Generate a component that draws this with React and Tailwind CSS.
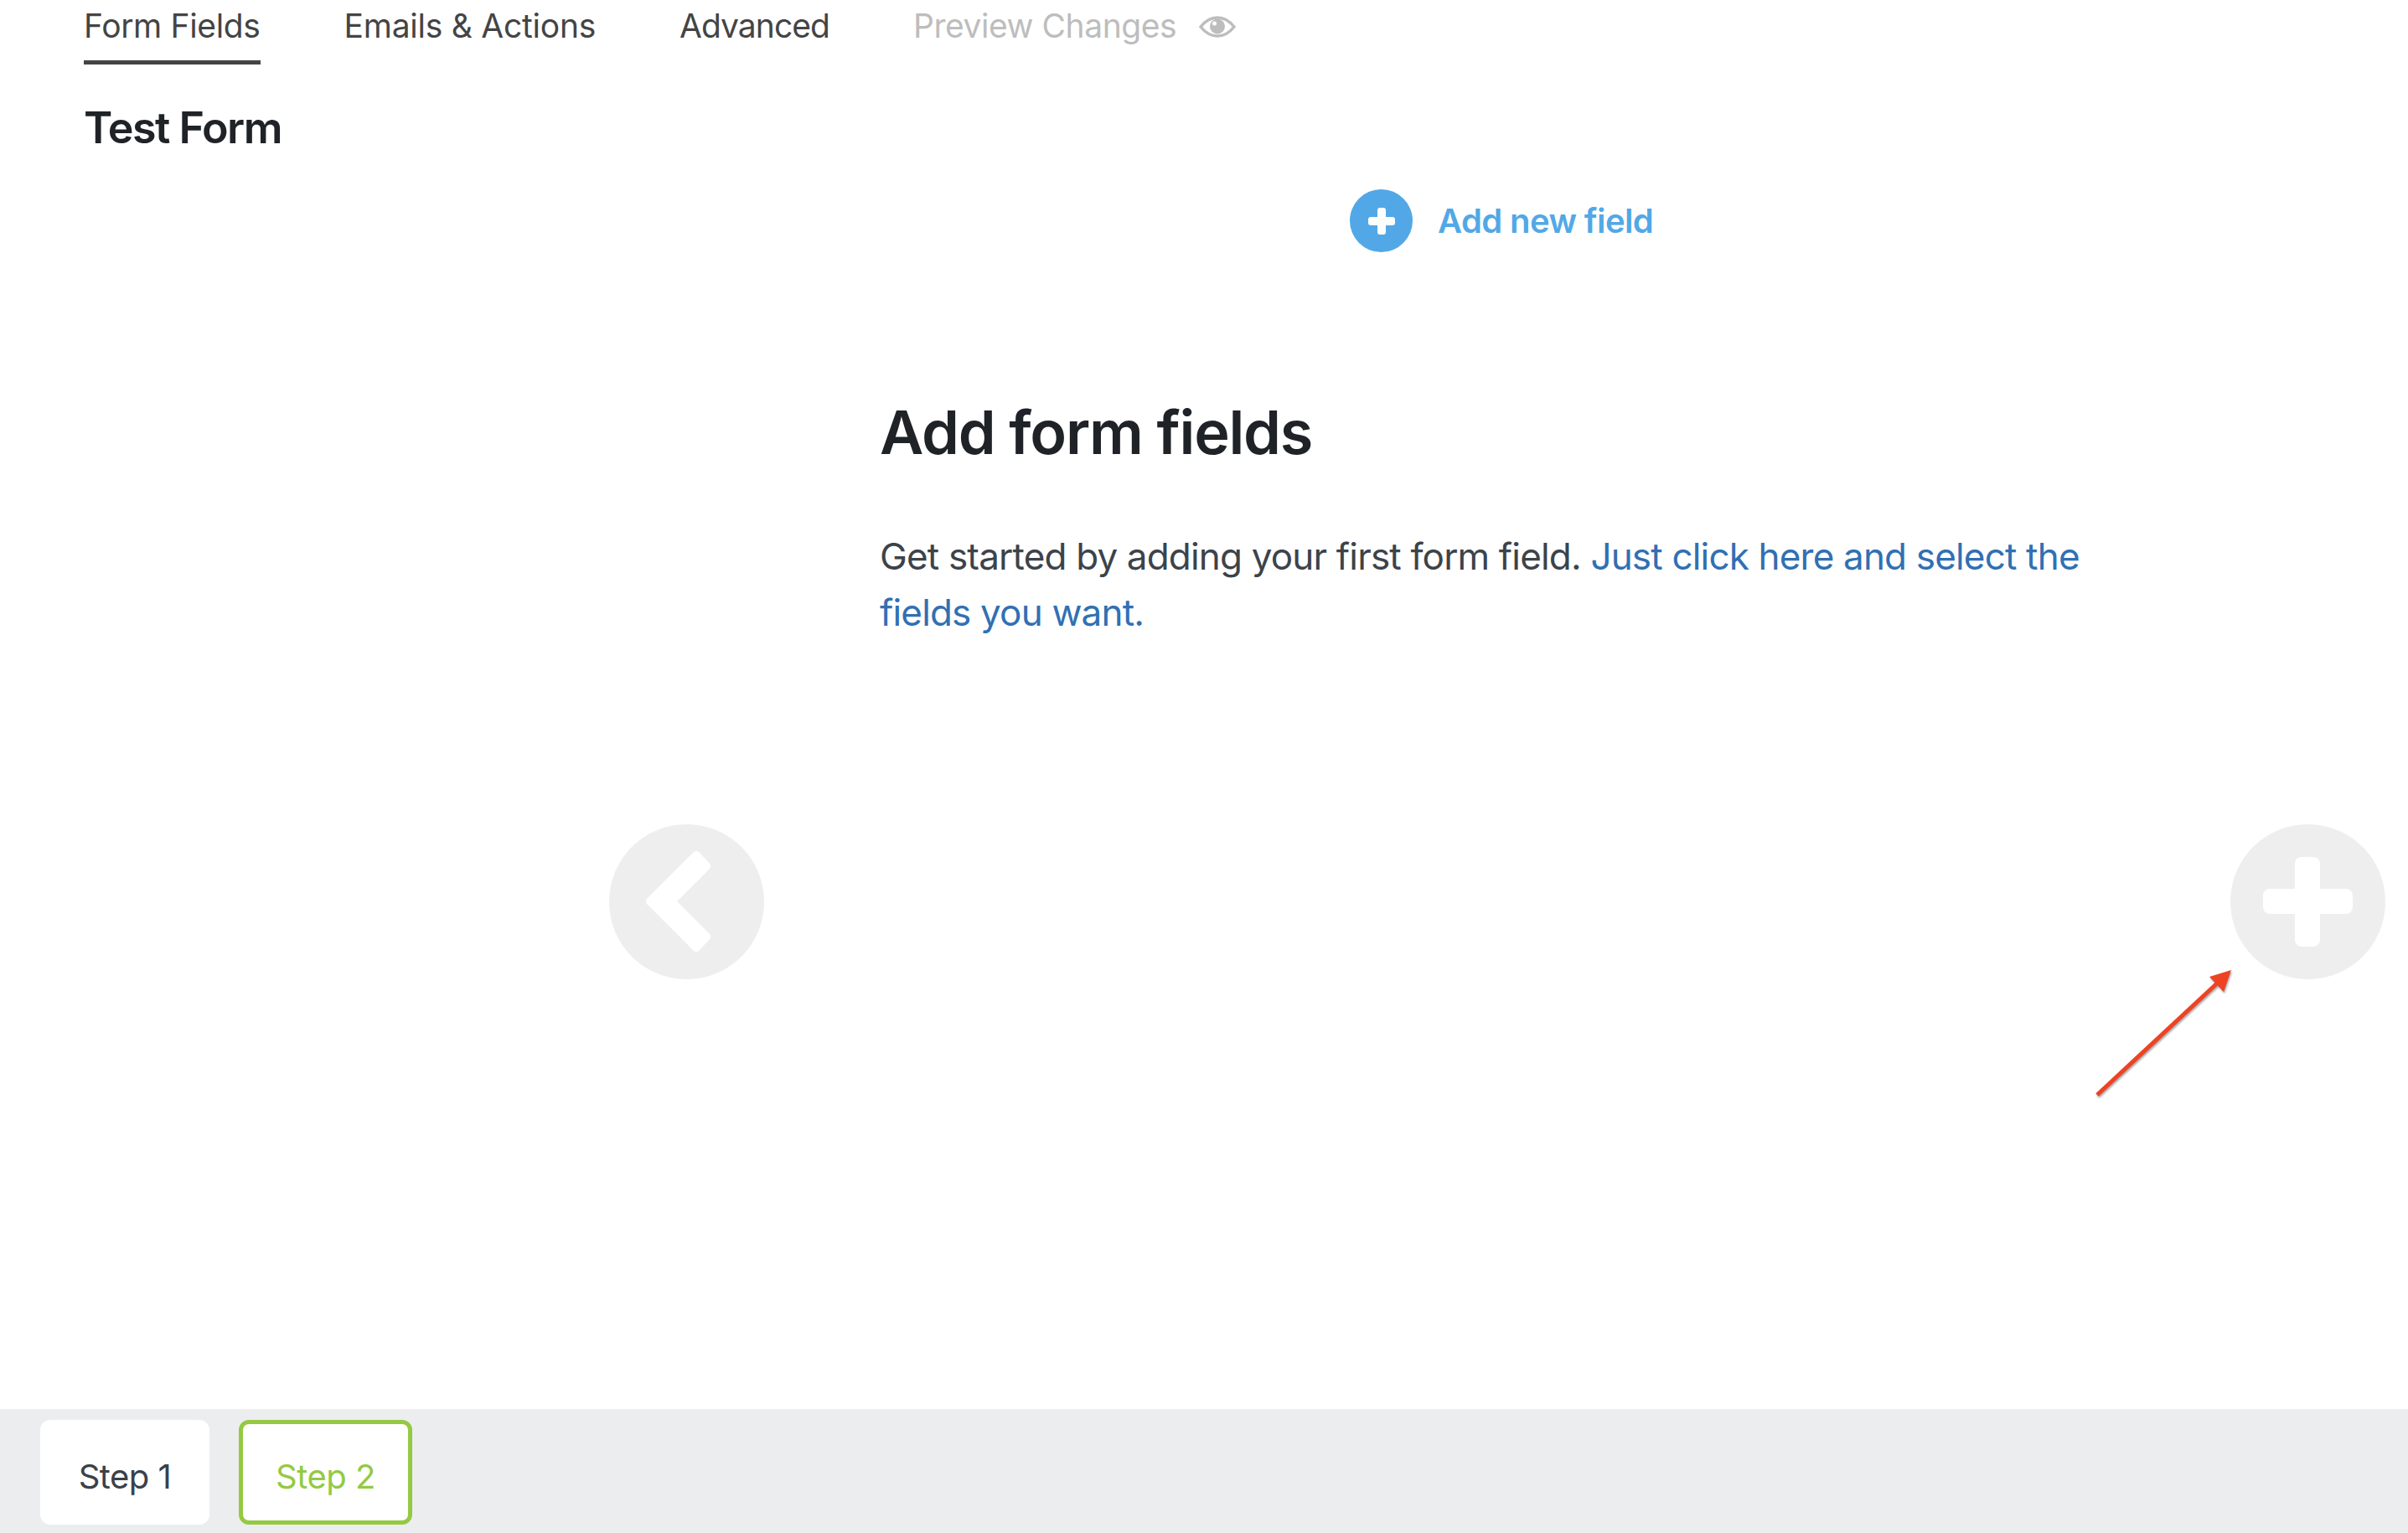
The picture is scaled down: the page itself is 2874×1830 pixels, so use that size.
import React from "react";

const font = { fontFamily: "Inter, 'Noto Sans', sans-serif" };

function Tab({ label, active, className = "" }) {
  return (
    <a
      className={
        active
          ? `h-[77px] border-b-[5px] border-[#444444] text-[#444444] ${className}`
          : `h-[77px] text-[#444444] ${className}`
      }
    >
      {label}
    </a>
  );
}

function EyeIcon() {
  return (
    <svg width="44" height="26" viewBox="0 0 44 26" className="ml-[27px] mt-[2px]">
      <path
        d="M2 13C8 5.5 14.500 2 22 2s14 3.500 20 11c-6 7.500-12.500 11-20 11S8 20.500 2 13z"
        fill="none"
        stroke="#bdbdbd"
        strokeWidth="3.500"
      />
      <circle cx="22" cy="12.500" r="9" fill="#bdbdbd" />
      <circle cx="18.500" cy="9" r="2.500" fill="#fff" />
    </svg>
  );
}

function NavCircle({ className, children }) {
  return (
    <button
      className={`absolute top-[984px] flex h-[185px] w-[185px] items-center justify-center rounded-full bg-[#eeeeee] ${className}`}
    >
      {children}
    </button>
  );
}

export default function App() {
  return (
    <div className="relative flex h-[1830px] flex-col overflow-hidden bg-white" style={font}>
      <nav className="flex items-start gap-[100px] pl-[100px] text-[39px] leading-[61px]">
        <Tab label="Form Fields" active className="tracking-[-0.35px]" />
        <Tab label="Emails & Actions" className="tracking-[-0.25px]" />
        <Tab label="Advanced" className="tracking-[-0.95px]" />
        <div className="flex items-center tracking-[-0.45px] text-[#bdbdbd]">
          Preview Changes
          <EyeIcon />
        </div>
      </nav>

      <h2 className="mt-[46px] pl-[100px] text-[52px] font-semibold leading-[60px] tracking-[-1.5px] text-[#1f2327]">
        Test Form
      </h2>

      <div className="mt-[43px] flex items-center pl-[1611px]">
        <span className="flex h-[75px] w-[75px] items-center justify-center rounded-full bg-[#52a8e6]">
          <svg width="32" height="32" viewBox="0 0 32 32">
            <rect x="11" y="0" width="10" height="32" rx="3" fill="#fff" />
            <rect x="0" y="11" width="32" height="10" rx="3" fill="#fff" />
          </svg>
        </span>
        <span className="ml-[30px] text-[40px] font-semibold tracking-[-0.6px] text-[#52a8e6]">
          Add new field
        </span>
      </div>

      <main className="mt-[170px] pl-[1050px] pr-[340px]">
        <h1 className="text-[72px] font-semibold leading-[90px] tracking-[-1.25px] text-[#1f2327]">
          Add form fields
        </h1>
        <p className="mt-[70px] text-[44px] leading-[67px] tracking-[-0.82px] text-[#3c434a]">
          Get started by adding your first form field.{" "}
          <a className="text-[#3070b3]">Just click here and select the fields you want.</a>
        </p>
      </main>

      <NavCircle className="left-[727px]">
        <svg width="185" height="185" viewBox="0 0 185 185">
          <path
            d="M104 37L116 50L74 92L116 134L104 147L49 92Z"
            fill="#fff"
            stroke="#fff"
            strokeWidth="10"
            strokeLinejoin="round"
          />
        </svg>
      </NavCircle>
      <NavCircle className="left-[2662px]">
        <svg width="107" height="107" viewBox="0 0 107 107">
          <rect x="38" y="0" width="30" height="107" rx="8" fill="#fff" />
          <rect x="0" y="38" width="107" height="30" rx="8" fill="#fff" />
        </svg>
      </NavCircle>

      {/* annotation arrow */}
      <svg
        className="absolute left-[2490px] top-[1150px] drop-shadow-[1px_2px_1px_rgba(0,0,0,0.35)]"
        width="190"
        height="170"
        viewBox="0 0 190 170"
      >
        <line x1="13" y1="157" x2="158" y2="22" stroke="#ee4323" strokeWidth="5" />
        <path d="M147 16L173 8L164 34Z" fill="#ee4323" />
      </svg>

      <footer className="mt-auto flex h-[148px] gap-[35px] bg-[#ecedef] pl-[48px] pt-[13px]">
        <button className="h-[125px] w-[202px] rounded-[12px] bg-white pt-[10px] text-[40px] tracking-[-0.5px] text-[#3a4149]">
          Step 1
        </button>
        <button className="h-[125px] w-[207px] rounded-[12px] border-[5px] border-[#95c943] bg-white pt-[10px] text-[40px] tracking-[-0.5px] text-[#95c943]">
          Step 2
        </button>
      </footer>
    </div>
  );
}
